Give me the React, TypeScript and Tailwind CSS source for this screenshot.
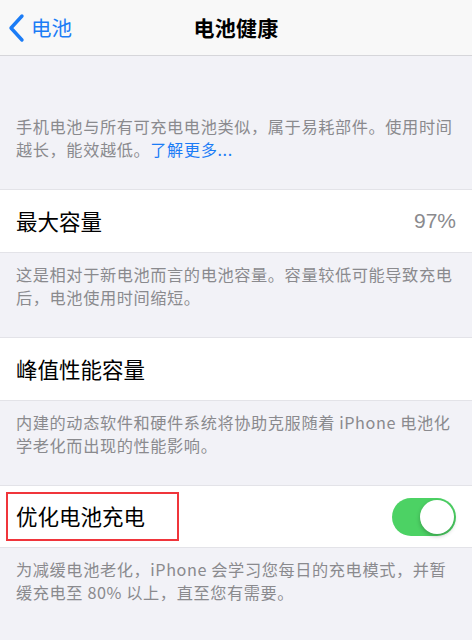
import { useState } from "react";

const cjk = { fontFamily: '"Noto Sans CJK SC", "Noto Sans", sans-serif' };

const Footer = ({ children, last }: { children: React.ReactNode; last?: boolean }) => (
	<p className={`px-4 pt-[10px] ${last ? "pb-8" : "pb-[28px]"} text-[16.2px] leading-[23px] tracking-[0.6px] text-[#8a8a8e]`}>
		{children}
	</p>
);

const Row = ({ children, h = "h-16" }: { children: React.ReactNode; h?: string }) => (
	<div className={`${h} flex items-center justify-between bg-white border-y border-[#e3e3e8] pl-4 pr-4`}>
		{children}
	</div>
);

const Toggle = () => {
	const [on, setOn] = useState(true);
	return (
		<button
			onClick={() => setOn(!on)}
			className={`relative w-[64px] h-[38px] rounded-full ${on ? "bg-[#4cd264]" : "bg-[#e5e5ea]"}`}
		>
			<span
				className={`absolute top-[2px] ${on ? "left-[28px]" : "left-[2px]"} size-[34px] rounded-full bg-white shadow-[0_2px_4px_rgba(0,0,0,0.25)]`}
			/>
		</button>
	);
};

const App = () => {
	return (
		<div className="w-[472px] h-[640px] bg-[#f2f2f7] overflow-hidden" style={cjk}>
			{/* nav bar */}
			<header className="h-14 relative flex items-center justify-center bg-[#f8f8f8] border-b border-[#d6d6da]">
				<button className="absolute left-2 top-0 h-full flex items-center gap-[6px] text-[#1b7cf6]">
					<svg width="17" height="30" viewBox="0 0 17 30" fill="none">
						<path d="M14 3 L3 15 L14 27" stroke="currentColor" strokeWidth="3.4" strokeLinecap="round" strokeLinejoin="round" />
					</svg>
					<span className="text-[20.5px]">电池</span>
				</button>
				<h1 className="text-[21px] font-semibold text-black tracking-[0.3px]">电池健康</h1>
			</header>

			<div className="pt-[49px]">
				<Footer>
					手机电池与所有可充电电池类似，属于易耗部件。使用时间越长，能效越低。<span className="text-[#1b7cf6] leading-[23px]">了解更多...</span>
				</Footer>
			</div>

			<Row>
				<span className="text-[21.5px] text-black">最大容量</span>
				<span className="text-[21px] text-[#8a8a8e]" style={{ fontFamily: '"Liberation Sans", Arial, sans-serif' }}>97%</span>
			</Row>
			<Footer>这是相对于新电池而言的电池容量。容量较低可能导致充电后，电池使用时间缩短。</Footer>

			<Row>
				<span className="text-[21.5px] text-black">峰值性能容量</span>
			</Row>
			<Footer>内建的动态软件和硬件系统将协助克服随着 iPhone 电池化学老化而出现的性能影响。</Footer>

			<Row h="h-[63px]">
				<span className="text-[21.5px] text-black outline-2 outline-[#f0353b] -ml-2 pl-2 pr-8 py-[6px]">优化电池充电</span>
				<Toggle />
			</Row>
			<Footer last>为减缓电池老化，iPhone 会学习您每日的充电模式，并暂缓充电至 80% 以上，直至您有需要。</Footer>
		</div>
	);
};

export default App;
